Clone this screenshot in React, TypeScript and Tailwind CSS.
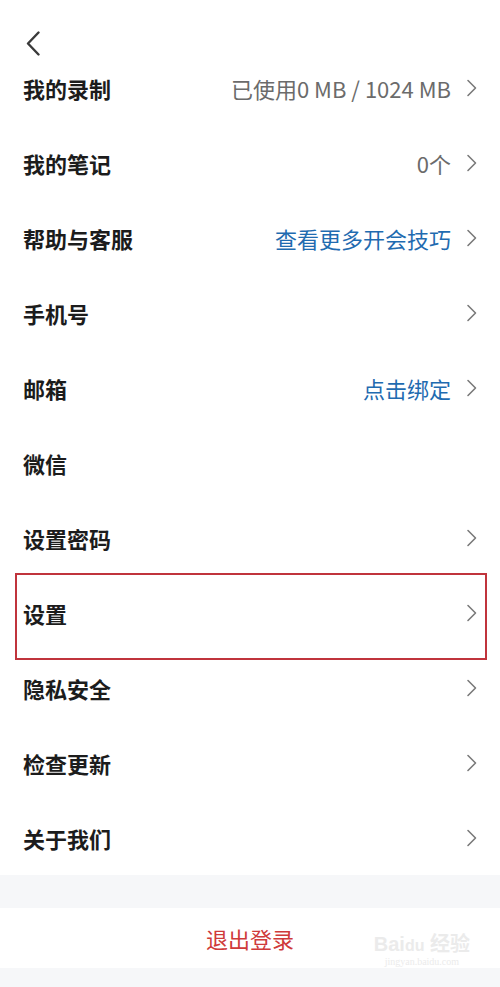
import React from "react";

const Chevron = () => (
  <svg width="12" height="18" viewBox="0 0 12 18" className="shrink-0">
    <path d="M2 1.5 L9.5 9 L2 16.5" fill="none" stroke="#7a7a7a" strokeWidth="1.6" strokeLinecap="round" strokeLinejoin="round" />
  </svg>
);

type Row = { label: string; value?: string; tone?: "gray" | "blue"; chevron: boolean; boxed?: boolean };

const rows: Row[] = [
  { label: "我的录制", value: "已使用0 MB / 1024 MB", tone: "gray", chevron: true },
  { label: "我的笔记", value: "0个", tone: "gray", chevron: true },
  { label: "帮助与客服", value: "查看更多开会技巧", tone: "blue", chevron: true },
  { label: "手机号", chevron: true },
  { label: "邮箱", value: "点击绑定", tone: "blue", chevron: true },
  { label: "微信", chevron: false },
  { label: "设置密码", chevron: true },
  { label: "设置", chevron: true, boxed: true },
  { label: "隐私安全", chevron: true },
  { label: "检查更新", chevron: true },
  { label: "关于我们", chevron: true },
];

export default function App() {
  return (
    <div
      className="w-[500px] h-[987px] bg-[#f6f7f9] flex flex-col overflow-hidden"
      style={{ fontFamily: '"Noto Sans CJK SC", "Noto Sans", sans-serif' }}
    >
      <div className="bg-white">
        <div className="h-[50px] flex items-start pl-[25px] pt-[31px]">
          <svg width="18" height="25" viewBox="0 0 18 25" className="shrink-0">
            <path d="M13.5 1.5 L3 12.5 L13.5 23.5" fill="none" stroke="#3a3a3a" strokeWidth="2.4" strokeLinecap="round" strokeLinejoin="round" />
          </svg>
        </div>
        {rows.map((r) => (
          <div key={r.label} className="relative h-[75px] flex items-center pl-[23px] pr-[22px]">
            <span className="text-[22px] font-bold text-[#1c1c1c] leading-none">{r.label}</span>
            <div className="ml-auto flex items-center gap-[15px]">
              {r.value && (
                <span
                  className={
                    r.tone === "blue"
                      ? "text-[22px] text-[#1f6bb0] leading-none"
                      : "text-[22px] text-[#6b6b6b] leading-none"
                  }
                >
                  {r.value}
                </span>
              )}
              {r.chevron ? <Chevron /> : <span className="w-[12px]" />}
            </div>
            {r.boxed && (
              <div className="absolute left-[15px] right-[13px] top-[-2px] bottom-[-10px] border-2 border-[#c0343c] pointer-events-none" />
            )}
          </div>
        ))}
      </div>
      <div className="h-[33px]" />
      <div className="relative h-[60px] bg-white flex items-center justify-center">
        <span className="text-[22px] text-[#cf3a3a] leading-none">退出登录</span>
        <div className="absolute right-[30px] top-[26px] flex flex-col items-center text-[#ebebeb] leading-none">
          <span className="text-[20px] font-bold" style={{ fontFamily: '"Liberation Sans", "Noto Sans CJK SC", sans-serif' }}>Bai<span className="text-[16px]">du</span> 经验</span>
          <span className="text-[10px] mt-[3px]" style={{ fontFamily: '"Liberation Serif", serif' }}>jingyan.baidu.com</span>
        </div>
      </div>
      <div className="flex-1" />
    </div>
  );
}
